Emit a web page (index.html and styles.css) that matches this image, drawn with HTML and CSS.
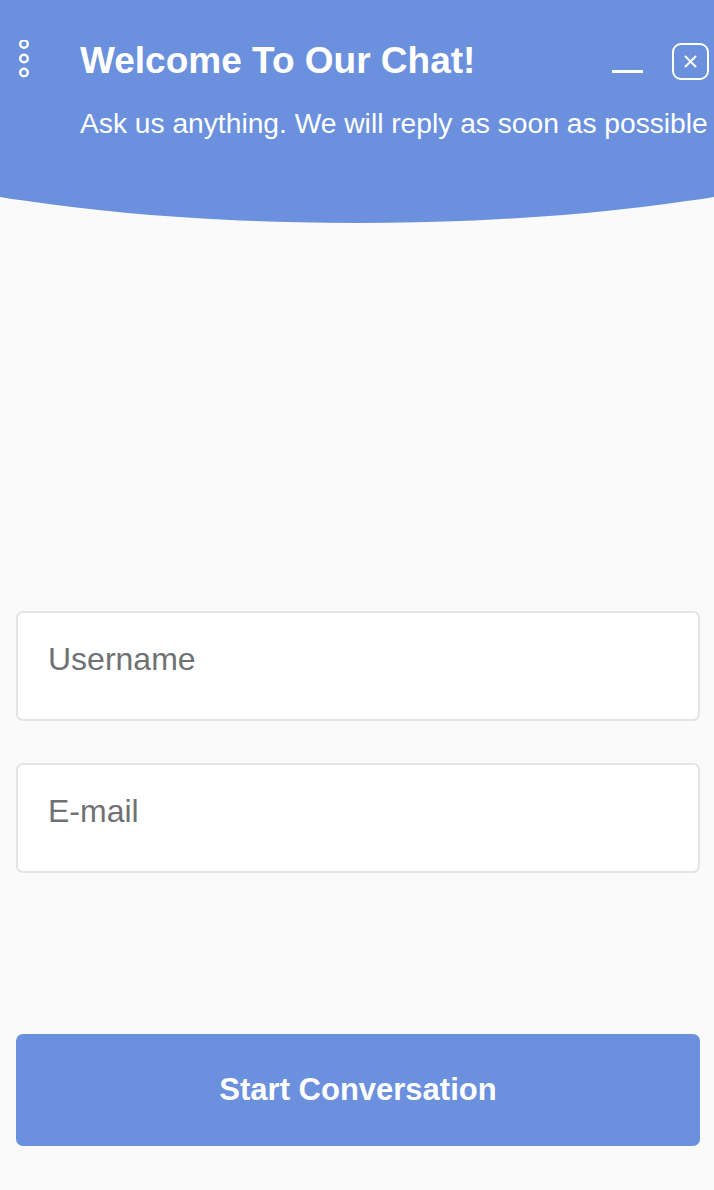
FILE: index.html
```html
<!DOCTYPE html>
<html lang="en">
<head>
<meta charset="utf-8">
<title>Chat</title>
<link rel="stylesheet" href="styles.css">
</head>
<body>
<div class="chat">
  <header class="chat-header">
    <div class="header-row">
      <div class="menu-col">
        <svg class="dots" width="14" height="42" viewBox="0 0 14 42" aria-hidden="true">
          <circle cx="7" cy="4" r="3.8" fill="none" stroke="#fff" stroke-width="2.4"/>
          <circle cx="7" cy="18.5" r="3.8" fill="none" stroke="#fff" stroke-width="2.4"/>
          <circle cx="7" cy="32.5" r="3.8" fill="none" stroke="#fff" stroke-width="2.4"/>
        </svg>
      </div>
      <h1 class="title">Welcome To Our Chat!</h1>
      <div class="controls">
        <svg class="minimize" width="31" height="36" viewBox="0 0 31 36" aria-hidden="true">
          <line x1="0" y1="28.5" x2="31" y2="28.5" stroke="#fff" stroke-width="3"/>
        </svg>
        <svg class="close" width="37" height="37" viewBox="0 0 37 37" aria-hidden="true">
          <rect x="1" y="1" width="35" height="35" rx="8" fill="none" stroke="#fff" stroke-width="2"/>
          <path d="M13.5 13.5 L23.5 23.5 M23.5 13.5 L13.5 23.5" stroke="#fff" stroke-width="2" stroke-linecap="round"/>
        </svg>
      </div>
    </div>
    <p class="subtitle">Ask us anything. We will reply as soon as possible</p>
  </header>
  <main class="chat-body">
    <form class="start-form">
      <div class="fields">
        <input class="field" type="text" placeholder="Username">
        <input class="field" type="email" placeholder="E-mail">
      </div>
      <button class="start-btn" type="button">Start Conversation</button>
    </form>
  </main>
</div>
</body>
</html>
```
FILE: styles.css
```css
* { box-sizing: border-box; }
html, body {
  margin: 0;
  padding: 0;
  background: #fafafa;
  font-family: "Liberation Sans", Arial, Helvetica, sans-serif;
}
.chat {
  height: 1190px;
  display: flex;
  flex-direction: column;
}
.chat-header {
  height: 224px;
  background: #6a90de;
  color: #fff;
  padding: 40px 5px 0 0;
  clip-path: ellipse(600px 133px at 50% 90px);
  flex: none;
}
.header-row {
  display: flex;
  align-items: flex-start;
}
.menu-col {
  width: 80px;
  flex: none;
  padding-left: 17px;
}
.dots { display: block; }
.title {
  margin: 0;
  flex: 1;
  font-size: 37px;
  line-height: 42px;
  font-weight: bold;
  white-space: nowrap;
}
.controls {
  display: flex;
  align-items: flex-start;
  gap: 29px;
  padding-top: 3px;
}
.minimize, .close { display: block; }
.subtitle {
  margin: 25px 0 0 80px;
  font-size: 28.2px;
  line-height: 32px;
  white-space: nowrap;
}
.chat-body {
  flex: 1;
  display: flex;
  flex-direction: column;
  justify-content: flex-end;
  padding: 0 14px 44px 16px;
}
.start-form {
  display: flex;
  flex-direction: column;
}
.fields {
  display: flex;
  flex-direction: column;
  gap: 42px;
}
.field {
  display: block;
  width: 100%;
  height: 110px;
  border: 2px solid #e4e4e4;
  border-radius: 7px;
  background: #fff;
  padding: 25px 30px 39px;
  font-family: inherit;
  font-size: 32px;
  line-height: 40px;
  color: #333;
  outline: none;
}
.field::placeholder { color: #6f7275; opacity: 1; }
.start-btn {
  margin-top: 161px;
  height: 112px;
  border: none;
  border-radius: 7px;
  background: #6a90de;
  color: #fff;
  font-family: inherit;
  font-size: 31px;
  font-weight: bold;
  cursor: pointer;
}
```
